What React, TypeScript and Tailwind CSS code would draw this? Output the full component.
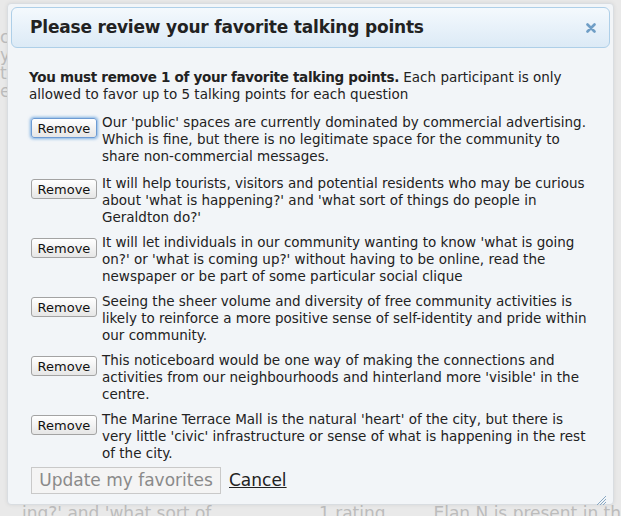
import React from 'react';

// lines broken where the original dialog wraps them
const points = [
  [
    "Our 'public' spaces are currently dominated by commercial advertising.",
    'Which is fine, but there is no legitimate space for the community to',
    'share non-commercial messages.',
  ],
  [
    'It will help tourists, visitors and potential residents who may be curious',
    "about 'what is happening?' and 'what sort of things do people in",
    "Geraldton do?'",
  ],
  [
    "It will let individuals in our community wanting to know 'what is going",
    "on?' or 'what is coming up?' without having to be online, read the",
    'newspaper or be part of some particular social clique',
  ],
  [
    'Seeing the sheer volume and diversity of free community activities is',
    'likely to reinforce a more positive sense of self-identity and pride within',
    'our community.',
  ],
  [
    'This noticeboard would be one way of making the connections and',
    "activities from our neighbourhoods and hinterland more 'visible' in the",
    'centre.',
  ],
  [
    "The Marine Terrace Mall is the natural 'heart' of the city, but there is",
    "very little 'civic' infrastructure or sense of what is happening in the rest",
    'of the city.',
  ],
];

const body = { fontFamily: '"DejaVu Sans", Verdana, sans-serif' };

export default function App() {
  return (
    <div className="relative w-[621px] h-[516px] overflow-hidden bg-[#e9e9e9]">
      {/* faded page behind the dialog */}
      <div className="flex flex-col h-full text-[#bcbcbc] text-[17px]" style={body}>
        <div className="pt-[28px] leading-[18px] flex flex-col">
          <span>c</span>
          <span>y</span>
          <span>tL</span>
          <span>e</span>
        </div>
        <div className="mt-auto h-[11px] flex items-start leading-[17px] whitespace-nowrap">
          <span className="pl-[22px] w-[385px]">ing?' and 'what sort of</span>
          <span className="w-[140px]">1 rating</span>
          <span>Elan N is present in th</span>
        </div>
      </div>

      {/* dialog */}
      <div className="absolute left-[7px] top-[3px] w-[607px] h-[502px] bg-[#f2f5f8] border border-[#d9dde1] rounded-[4px] p-[3px] flex flex-col shadow-[0_0_4px_rgba(0,0,0,0.08)]">
        <div className="h-[41px] shrink-0 rounded-[6px] border border-[#aecfe8] bg-gradient-to-b from-[#f4f9fd] to-[#dceaf6] flex items-center pl-[18px] pr-[13px]">
          <h1
            className="flex-1 text-[17px] tracking-[-0.2px] font-bold text-[#222]"
            style={{ fontFamily: '"DejaVu Sans", sans-serif' }}
          >
            Please review your favorite talking points
          </h1>
          <svg width="10" height="10" viewBox="0 0 10 10" className="mt-[1px]">
            <path d="M1.5 1.5 L8.5 8.5 M8.5 1.5 L1.5 8.5" stroke="#6f9ec6" strokeWidth="2.6" strokeLinecap="round" />
          </svg>
        </div>

        <div className="flex-1 flex flex-col pl-[18px] pr-[2px] pt-[21px] text-[13.5px] leading-[17px] text-[#222] whitespace-nowrap" style={body}>
          <p className="mb-[11px]">
            <b className="tracking-[-0.3px]">You must remove 1 of your favorite talking points.</b> Each participant is only
            <br />
            allowed to favor up to 5 talking points for each question
          </p>

          {points.map((lines, i) => (
            <div key={i} className={'flex items-start ' + (i === 0 ? 'mb-[10px]' : 'mb-[8px]')}>
              <button
                className={
                  'shrink-0 ml-[2px] mt-[4px] mr-[5px] w-[66px] h-[20px] rounded-[3px] border text-[13px] leading-none text-[#111] bg-gradient-to-b from-[#ffffff] to-[#e6e6e6] ' +
                  (i === 0
                    ? 'border-[#6d9bd3] shadow-[0_0_3px_1px_rgba(80,150,220,0.7)]'
                    : 'border-[#a3a3a3]')
                }
                style={body}
              >
                Remove
              </button>
              <div className="flex flex-col">
                {lines.map((line, j) => (
                  <span key={j}>{line}</span>
                ))}
              </div>
            </div>
          ))}

          <div className="flex items-center gap-[8px] mt-[-3px] ml-[2px]">
            <button
              disabled
              className="w-[190px] h-[27px] border border-[#c9c9c9] bg-[#f4f4f4] text-[#8a8a8a] text-[17px] leading-none"
              style={body}
            >
              Update my favorites
            </button>
            <a href="#" className="text-[17px] text-[#222] underline" style={body}>
              Cancel
            </a>
          </div>

          <div className="mt-auto self-end mb-[2px] mr-[1px]">
            <svg width="12" height="12" viewBox="0 0 12 12">
              <path d="M11 2 L2 11 M11 5 L5 11 M11 8 L8 11" stroke="#8aa9c4" strokeWidth="1" />
            </svg>
          </div>
        </div>
      </div>
    </div>
  );
}
